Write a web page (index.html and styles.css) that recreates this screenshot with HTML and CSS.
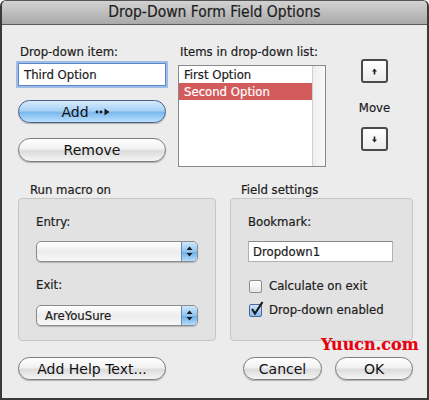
FILE: index.html
```html
<!DOCTYPE html>
<html lang="en">
<head>
    <meta charset="UTF-8">
    <title>Drop-Down Form Field Options</title>
    <link rel="stylesheet" href="styles.css">
</head>
<body>
    <div class="window">
        <div class="titlebar">Drop-Down Form Field Options</div>

        <div class="content">
            <div class="top">
                <div class="item-col">
                    <div class="label">Drop-down item:</div>
                    <div class="textfield focus">Third Option</div>
                    <div class="aqua blue add-btn">
                        Add
                        <svg width="16" height="8" viewBox="0 0 16 8">
                            <circle cx="2" cy="4" r="1.4" fill="#1a1a1a"/>
                            <circle cx="6" cy="4" r="1.4" fill="#1a1a1a"/>
                            <path d="M9.5 0.5 L14.5 4 L9.5 7.5 Z" fill="#1a1a1a"/>
                        </svg>
                    </div>
                    <div class="aqua remove-btn">Remove</div>
                </div>

                <div class="list-col">
                    <div class="label">Items in drop-down list:</div>
                    <div class="listbox">
                        <div class="rows">
                            <div class="row">First Option</div>
                            <div class="row selected">Second Option</div>
                        </div>
                        <div class="scrollbar"></div>
                    </div>
                </div>

                <div class="move-col">
                    <div class="move-btn">
                        <svg width="7" height="7" viewBox="0 0 7 7"><path d="M3.5 0.5 L6 3.5 H4.3 V6.5 H2.7 V3.5 H1 Z" fill="#222"/></svg>
                    </div>
                    <div class="move-label">Move</div>
                    <div class="move-btn">
                        <svg width="7" height="7" viewBox="0 0 7 7"><path d="M3.5 6.5 L6 3.5 H4.3 V0.5 H2.7 V3.5 H1 Z" fill="#222"/></svg>
                    </div>
                </div>
            </div>

            <div class="groups">
                <div class="group macro-group">
                    <div class="group-title">Run macro on</div>
                    <div class="group-box">
                        <div class="label">Entry:</div>
                        <div class="popup">
                            <span class="popup-value"></span>
                            <span class="popup-arrows">
                                <svg width="7" height="11" viewBox="0 0 7 11">
                                    <path d="M3.5 0.5 L6.5 4 H0.5 Z" fill="#1a1a1a"/>
                                    <path d="M3.5 10.5 L6.5 7 H0.5 Z" fill="#1a1a1a"/>
                                </svg>
                            </span>
                        </div>
                        <div class="label exit-label">Exit:</div>
                        <div class="popup exit-popup">
                            <span class="popup-value">AreYouSure</span>
                            <span class="popup-arrows">
                                <svg width="7" height="11" viewBox="0 0 7 11">
                                    <path d="M3.5 0.5 L6.5 4 H0.5 Z" fill="#1a1a1a"/>
                                    <path d="M3.5 10.5 L6.5 7 H0.5 Z" fill="#1a1a1a"/>
                                </svg>
                            </span>
                        </div>
                    </div>
                </div>

                <div class="group field-group">
                    <div class="group-title">Field settings</div>
                    <div class="group-box">
                        <div class="label">Bookmark:</div>
                        <div class="textfield bookmark">Dropdown1</div>
                        <div class="check-row first-check">
                            <span class="checkbox"></span>
                            Calculate on exit
                        </div>
                        <div class="check-row">
                            <span class="checkbox checked">
                                <svg width="14" height="15" viewBox="0 0 14 15"><path d="M2 8 L5 12.5 L12.5 1" fill="none" stroke="#1b1b1b" stroke-width="2.2"/></svg>
                            </span>
                            Drop-down enabled
                        </div>
                    </div>
                </div>
            </div>

            <div class="actions">
                <div class="aqua help-btn">Add Help Text...</div>
                <div class="right-actions">
                    <div class="aqua cancel-btn">Cancel</div>
                    <div class="aqua ok-btn">OK</div>
                </div>
            </div>
        </div>

        <div class="watermark">Yuucn.com</div>
    </div>
</body>
</html>
```

FILE: styles.css
```css
body {
    margin: 0;
    background: #fff;
    font-family: 'DejaVu Sans Condensed', 'DejaVu Sans', sans-serif;
    font-size: 13px;
    color: #1c1c1c;
    -webkit-text-stroke-width: 0.2px;
}

.window {
    position: relative;
    width: 429px;
    height: 400px;
    box-sizing: border-box;
    border: 2px solid #3a3a3a;
    border-top: 1px solid #555;
    border-radius: 6px 6px 0 0;
    background: #ececec;
    overflow: hidden;
}

.titlebar {
    height: 23px;
    line-height: 23px;
    text-align: center;
    font-size: 15.5px;
    color: #1e1e1e;
    background: linear-gradient(#d2d2d2, #a9a9a9);
    border-bottom: 1px solid #5a5a5a;
}

.content {
    padding: 0 14px 0 16px;
}

.label {
    line-height: 16px;
    height: 16px;
}

/* top part */
.top {
    display: flex;
    padding-top: 19px;
}

.top .label {
    padding-left: 2px;
}

.item-col {
    width: 148px;
    display: flex;
    flex-direction: column;
}

.textfield {
    height: 23px;
    line-height: 21px;
    box-sizing: border-box;
    background: #fff;
    border: 1px solid #9a9a9a;
    border-top-color: #6e6e6e;
    padding: 0 5px;
}

.textfield.focus {
    margin-top: 3px;
    border-color: #5f86c4;
    box-shadow: 0 0 0 2px #9ebde8;
}

.aqua {
    height: 23px;
    box-sizing: border-box;
    border: 1px solid #7d7d7d;
    border-radius: 12px;
    background: linear-gradient(#ffffff 0%, #f1f1f1 45%, #dcdcdc 55%, #f4f4f4 100%);
    box-shadow: 0 1px 1px rgba(0, 0, 0, 0.25);
    display: flex;
    align-items: center;
    justify-content: center;
    font-family: 'DejaVu Sans', sans-serif;
    font-size: 14px;
    color: #111;
    -webkit-text-stroke-width: 0;
}

.aqua.blue {
    border-color: #4c5f8c;
    background: linear-gradient(#d7ebfc 0%, #a9d2f6 45%, #7cb9ef 55%, #b9e1fd 100%);
}

.add-btn {
    margin-top: 14px;
    gap: 6px;
    padding-right: 12px;
}

.remove-btn {
    margin-top: 15px;
    height: 24px;
}

.list-col {
    width: 148px;
    margin-left: 12px;
}

.listbox {
    margin-top: 5px;
    height: 102px;
    box-sizing: border-box;
    border: 1px solid #8a8a8a;
    background: #fff;
    display: flex;
}

.rows {
    flex: 1;
}

.row {
    height: 17px;
    line-height: 17px;
    padding-left: 5px;
}

.row.selected {
    background: #d45b5b;
    color: #fff;
}

.scrollbar {
    width: 12px;
    border-left: 1px solid #cfcfcf;
    background: linear-gradient(to right, #eeeeee, #f9f9f9);
}

.move-col {
    margin-left: 35px;
    width: 27px;
    display: flex;
    flex-direction: column;
    align-items: center;
}

.move-btn {
    width: 27px;
    height: 24px;
    box-sizing: border-box;
    border: 2px solid #4a4a4a;
    border-radius: 3px;
    background: linear-gradient(#ffffff, #ececec);
    display: flex;
    align-items: center;
    justify-content: center;
}

.move-col .move-btn:first-child {
    margin-top: 15px;
}

.move-label {
    margin-top: 17px;
    line-height: 16px;
    height: 16px;
    margin-bottom: 11px;
}

/* group boxes */
.groups {
    display: flex;
    gap: 14px;
    margin-top: 15px;
}

.macro-group {
    width: 198px;
}

.field-group {
    width: 183px;
}

.group-title {
    line-height: 16px;
    height: 16px;
    padding-left: 12px;
}

.field-group .group-title {
    padding-left: 11px;
}

.group-box {
    height: 143px;
    box-sizing: border-box;
    border: 1px solid #c6c6c6;
    border-radius: 4px;
    background: #e2e2e2;
    padding: 15px 17px 0 17px;
}

.popup {
    margin-top: 11px;
    height: 21px;
    box-sizing: border-box;
    border: 1px solid #8c8c8c;
    border-radius: 5px;
    background: linear-gradient(#ffffff, #ececec 50%, #f8f8f8);
    display: flex;
    overflow: hidden;
    box-shadow: 0 1px 1px rgba(0, 0, 0, 0.2);
}

.popup-value {
    flex: 1;
    line-height: 19px;
    padding-left: 8px;
}

.popup-arrows {
    width: 15px;
    border-left: 1px solid #6f86b5;
    background: linear-gradient(#cfe6fb, #8ec5f3 50%, #6caeea 52%, #b4dcfb);
    display: flex;
    align-items: center;
    justify-content: center;
}

.exit-label {
    margin-top: 15px;
}

.exit-popup {
    margin-top: 12px;
}

.textfield.bookmark {
    margin-top: 11px;
    height: 21px;
    line-height: 19px;
    width: 145px;
    padding-left: 4px;
    border-color: #b2b2b2;
    border-top-color: #8a8a8a;
}

.check-row {
    display: flex;
    align-items: center;
    gap: 7px;
    line-height: 16px;
    height: 16px;
    padding-left: 1px;
}

.first-check {
    margin-top: 16px;
}

.check-row + .check-row {
    margin-top: 8px;
}

.checkbox {
    position: relative;
    width: 13px;
    height: 13px;
    box-sizing: border-box;
    border: 1px solid #8c8c8c;
    border-radius: 2px;
    background: linear-gradient(#ffffff, #e6e6e6);
}

.checkbox.checked {
    border-color: #4f6797;
    background: linear-gradient(#cfe5fb, #83bcef);
}

.checkbox svg {
    position: absolute;
    left: 0;
    top: -4px;
}

/* bottom buttons */
.actions {
    display: flex;
    justify-content: space-between;
    margin-top: 16px;
}

.help-btn {
    width: 148px;
}

.right-actions {
    display: flex;
    gap: 13px;
}

.cancel-btn {
    width: 79px;
}

.ok-btn {
    width: 78px;
}

.watermark {
    position: absolute;
    left: 319px;
    top: 334px;
    font-family: 'DejaVu Serif', serif;
    font-size: 16px;
    font-weight: bold;
    color: #e8000c;
}
```
